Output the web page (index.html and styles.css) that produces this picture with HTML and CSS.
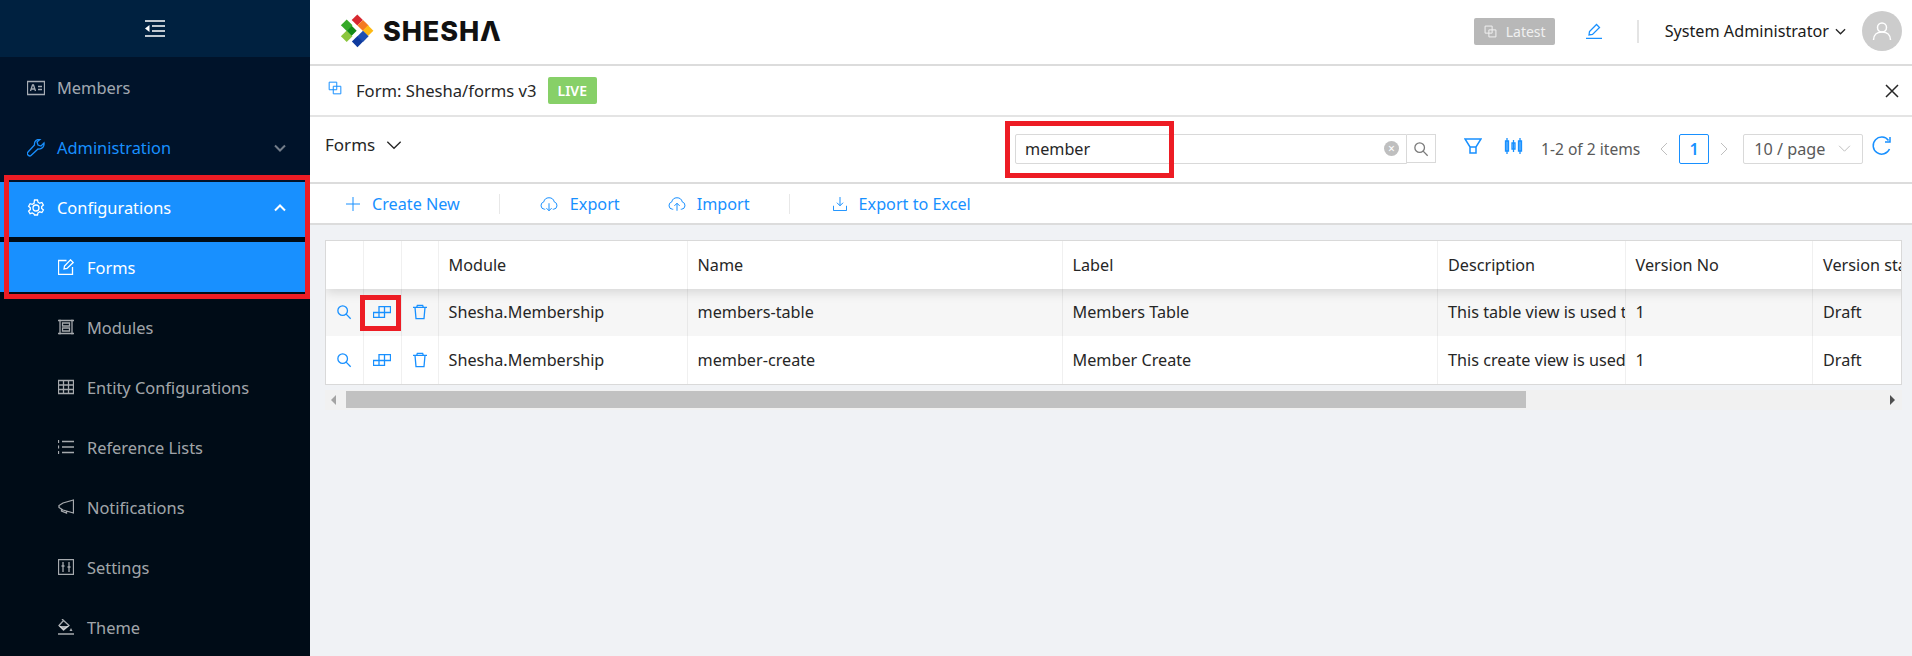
FILE: index.html
```html
<!DOCTYPE html>
<html lang="en">
<head>
  <meta charset="UTF-8">
  <title>Forms - Shesha</title>
  <link rel="stylesheet" href="styles.css">
</head>
<body>
  <svg class="sprite" width="0" height="0">
    <symbol id="i-search" viewBox="0 0 24 24"><circle cx="10" cy="10" r="7.2"/><path d="M15.2 15.2 22 22"/></symbol>
    <symbol id="i-blocks" viewBox="0 0 18 12"><path d="M.5 6.500h11v5H.5zM6 6.500v5M6 6.500V.5h11.500v6h-6M11.500.5v6"/></symbol>
    <symbol id="i-trash" viewBox="0 0 24 24"><path d="M1.500 5h21M7 5l1-3h8l1 3M4.500 5l1.500 17h12l1.500-17"/></symbol>
    <symbol id="i-copy" viewBox="0 0 24 24"><path d="M2 2h13v13H2zM9 9h13v13H9z"/></symbol>
    <symbol id="i-chev" viewBox="0 0 24 24"><path d="M2 7l10 10L22 7"/></symbol>
    <symbol id="i-cloud" viewBox="0 0 24 24"><path d="M7 19H6a5 5 0 0 1-1-9.800 7.200 7.200 0 0 1 14 0A5 5 0 0 1 18 19h-1"/></symbol>
  </svg>

  <aside class="sidebar">
    <div class="sidebar-top">
      <svg class="collapse" viewBox="0 0 20 18"><path d="M0 1h20M7 6h13M7 11h13M0 16h20"/><path class="solid" d="M4.500 5v7L0 8.500z"/></svg>
    </div>
    <nav class="menu">
      <a class="item item-first">
        <svg class="ic" viewBox="0 0 18 14"><path d="M.5.500h17v13H.5zM3.500 10l2-6h1l2 6M4.500 8h3M11 5.500h4M11 8.500h4"/></svg>
        <span>Members</span>
      </a>
      <a class="item item-open">
        <svg class="ic" viewBox="0 0 18 18"><path d="M17 4l-3 3-3-1-1-3 3-2.500C10 0 7 2 7.500 6L1 13c-1 1-.5 2.500 0 3s2 1.500 3 .5l7-6.500c4 .5 6.500-2.500 6-6z"/></svg>
        <span>Administration</span>
        <svg class="caret" viewBox="0 0 12 8"><path d="M1 1.500l5 5 5-5"/></svg>
      </a>
      <a class="item item-active">
        <svg class="ic" viewBox="0 0 18 18"><circle cx="9" cy="9" r="3"/><path d="M7.500 1h3l.5 2.200 1.700 1 2.200-.7 1.500 2.600-1.700 1.500v1.800l1.700 1.500-1.500 2.600-2.200-.7-1.700 1-.5 2.200h-3L7 15l-1.700-1-2.200.7-1.500-2.600 1.700-1.500V8.800L1.600 7.300l1.500-2.600 2.200.7 1.700-1z"/></svg>
        <span>Configurations</span>
        <svg class="caret" viewBox="0 0 12 8"><path d="M1 6.500l5-5 5 5"/></svg>
      </a>
      <div class="submenu">
        <a class="item sub sub-active">
          <svg class="ic" viewBox="0 0 16 16"><path d="M8.500 1.500H.5v14h14V8M6 10l.5-3L12.500.8l2.700 2.700L9 9.500z"/></svg>
          <span>Forms</span>
        </a>
        <a class="item sub">
          <svg class="ic" viewBox="0 0 16 16"><path d="M2 .5v15M14 .5v15M0 1.500h16M0 14.500h16M4.500 4h7v3h-7zM4.500 9h7v3h-7z"/></svg>
          <span>Modules</span>
        </a>
        <a class="item sub">
          <svg class="ic" viewBox="0 0 16 14"><path d="M.5.500h15v13H.5zM.5 5h15M.5 9.500h15M5.500.5v13M10.500.5v13"/></svg>
          <span>Entity Configurations</span>
        </a>
        <a class="item sub">
          <svg class="ic" viewBox="0 0 16 14"><path d="M4 1.500h12M4 7h12M4 12.500h12M.5 0v3M.5 5.500v3M.5 11v3"/></svg>
          <span>Reference Lists</span>
        </a>
        <a class="item sub">
          <svg class="ic" viewBox="0 0 16 15"><path d="M15.500.5v13L5 10.500 1 8V6l4-2.500zM3.500 9.500v2l5 2v-1.500"/></svg>
          <span>Notifications</span>
        </a>
        <a class="item sub">
          <svg class="ic" viewBox="0 0 16 16"><path d="M.5.500h15v15H.5zM5 3v10M11 3v10M3.500 7h3M9.500 8h3"/></svg>
          <span>Settings</span>
        </a>
        <a class="item sub">
          <svg class="ic" viewBox="0 0 16 16"><path d="M4 0l2 2M5.500 1.500L1 6.500l4.500 4.500 5.500-4.500zM0 15h16"/><path class="solid" d="M1 7h10L5.500 11zM13 9l1.500 3h-3z"/></svg>
          <span>Theme</span>
        </a>
      </div>
    </nav>
  </aside>

  <div class="main">
    <header class="topbar">
      <div class="logo">
        <svg class="logo-mark" viewBox="0 0 32 32">
          <path class="m1" d="M16.300-.6l5.600 5.600-5.600 5.600-5.600-5.600z"/>
          <path class="m2" d="M22 4.900l5.600 5.600-5.600 5.600-5.600-5.600z"/>
          <path class="m3" d="M27 10.300l5.400 5.400-5.400 5.400-5.400-5.400z"/>
          <path class="m4" d="M22 15.700l5.600 5.600-5.600 5.600-5.600-5.600z"/>
          <path class="m5" d="M16.500 21l5.600 5.600-5.600 5.600-5.600-5.600z"/>
          <path class="m6" d="M5.700 4.500l5.800 5.800-5.800 5.800-5.800-5.800z"/>
          <path class="m8" d="M5.700 15.500l5.800 5.800-5.800 5.800-5.800-5.800z"/>
          <path class="m7" d="M10.700 10.800l5 5-5 5-5-5z"/>
        </svg>
        <span class="logo-text">SHESHΛ</span>
      </div>
      <div class="top-right">
        <span class="tag-latest"><svg class="line"><use href="#i-copy"/></svg>Latest</span>
        <svg class="edit" viewBox="0 0 16 16"><path d="M0 15.500h16M3 12l.5-3.500L10.500 1.500l3 3L6.500 11.500z"/></svg>
        <span class="vbar"></span>
        <span class="username">System Administrator</span>
        <svg class="line user-caret"><use href="#i-chev"/></svg>
        <span class="avatar">
          <svg viewBox="0 0 20 20"><circle cx="10" cy="6.500" r="4.500"/><path d="M1.500 19c0-5 3.500-8 8.500-8s8.500 3 8.500 8"/></svg>
        </span>
      </div>
    </header>

    <div class="formbar">
      <svg class="line form-ic"><use href="#i-copy"/></svg>
      <span class="form-name">Form: Shesha/forms v3</span>
      <span class="tag-live">LIVE</span>
      <svg class="close" viewBox="0 0 14 14"><path d="M1 1l12 12M13 1L1 13"/></svg>
    </div>

    <div class="toolbar">
      <div class="title">Forms <svg class="line title-caret"><use href="#i-chev"/></svg></div>
      <div class="search">
        <div class="search-input">
          <span>member</span>
          <span class="clear">×</span>
        </div>
        <button class="search-btn"><svg class="line"><use href="#i-search"/></svg></button>
      </div>
      <svg class="tool-ic filter" viewBox="0 0 18 16"><path d="M1 1h16l-5 8H6zM6 9h6v6H6z"/></svg>
      <svg class="tool-ic columns" viewBox="0 0 18 16"><path d="M1 3h3v10H1zM7.500 5h3v6h-3zM14 3h3v10h-3zM2.500 0v16M9 2v12M15.500 0v16"/></svg>
      <span class="count">1-2 of 2 items</span>
      <svg class="page-arrow first" viewBox="0 0 8 14"><path d="M7 1L1 7l6 6"/></svg>
      <span class="page-num">1</span>
      <svg class="page-arrow" viewBox="0 0 8 14"><path d="M1 1l6 6-6 6"/></svg>
      <div class="page-size">10 / page <svg class="line"><use href="#i-chev"/></svg></div>
      <svg class="tool-ic reload" viewBox="0 0 20 20"><path d="M17.500 13a8.500 8.500 0 1 1-1-8.500M18 1v5h-5"/></svg>
    </div>

    <div class="actions">
      <a class="action create"><svg class="act-ic" viewBox="0 0 14 14"><path d="M7 0v14M0 7h14"/></svg>Create New</a>
      <span class="act-sep"></span>
      <a class="action export"><svg class="act-ic cloud" viewBox="0 0 24 24"><use href="#i-cloud"/><path d="M12 11v10M8.500 17.500 12 21l3.500-3.500"/></svg>Export</a>
      <a class="action last"><svg class="act-ic cloud" viewBox="0 0 24 24"><use href="#i-cloud"/><path d="M12 11v10M8.500 14.500 12 11l3.500 3.500"/></svg>Import</a>
      <span class="act-sep"></span>
      <a class="action"><svg class="act-ic" viewBox="0 0 16 16"><path d="M8 0v10M4.500 6.500 8 10l3.500-3.500M.5 10v5.500h15V10"/></svg>Export to Excel</a>
    </div>

    <div class="content">
      <div class="table-wrap">
        <table class="grid">
          <colgroup>
            <col class="c-ic"><col class="c-ic2"><col class="c-ic">
            <col class="c-mod"><col class="c-name"><col class="c-label">
            <col class="c-desc"><col class="c-ver"><col class="c-status">
          </colgroup>
          <thead>
            <tr><th></th><th></th><th></th><th>Module</th><th>Name</th><th>Label</th><th>Description</th><th>Version No</th><th>Version status</th></tr>
          </thead>
          <tbody>
            <tr class="hover">
              <td class="ic-cell"><svg class="line"><use href="#i-search"/></svg></td>
              <td class="ic-cell"><svg class="line blocks"><use href="#i-blocks"/></svg></td>
              <td class="ic-cell"><svg class="line"><use href="#i-trash"/></svg></td>
              <td>Shesha.Membership</td><td>members-table</td><td>Members Table</td>
              <td>This table view is used to list</td><td>1</td><td>Draft</td>
            </tr>
            <tr>
              <td class="ic-cell"><svg class="line"><use href="#i-search"/></svg></td>
              <td class="ic-cell"><svg class="line blocks"><use href="#i-blocks"/></svg></td>
              <td class="ic-cell"><svg class="line"><use href="#i-trash"/></svg></td>
              <td>Shesha.Membership</td><td>member-create</td><td>Member Create</td>
              <td>This create view is used to add</td><td>1</td><td>Draft</td>
            </tr>
          </tbody>
        </table>
      </div>
      <div class="hscroll">
        <span class="arrow-l"></span>
        <span class="thumb"></span>
        <span class="arrow-r"></span>
      </div>
    </div>
  </div>

  <div class="mark mark-menu"></div>
  <div class="mark mark-search"></div>
  <div class="mark mark-row"></div>
</body>
</html>
```

FILE: styles.css
```css
* { box-sizing: border-box; }
html, body { height: 100%; }
body { margin: 0; display: flex; height: 656px; overflow: hidden; font-family: "Noto Sans", Arial, sans-serif; font-size: 16.2px; color: #262626; background: #f0f2f5; }
svg { display: block; flex: none; }
svg path, svg circle { fill: none; stroke: currentColor; vector-effect: non-scaling-stroke; }
svg .solid { fill: currentColor; stroke: none; }
.sprite { position: absolute; }
.line { width: 16px; height: 16px; }

.sidebar { width: 310px; flex: none; background: #000c17; display: flex; flex-direction: column; }
.sidebar-top { height: 57px; flex: none; background: #002140; display: flex; align-items: center; justify-content: center; color: #fff; }
.collapse { width: 20px; height: 18px; stroke-width: 1.5; }
.menu { flex: 1; font-size: 16.4px; }
.item { display: flex; align-items: center; height: 55px; margin-bottom: 5px; padding: 0 27px 4px; color: rgba(255,255,255,.65); }
.item > span { margin-left: 12px; }
.item .ic { width: 18px; height: 18px; stroke-width: 1.3; }
.item-first { margin-top: 5px; background: #00132a; box-shadow: 0 -5px 0 #00132a, 0 5px 0 #00132a; }
.item-open { color: #1890ff; background: #00132a; box-shadow: 0 5px 0 #00132a; }
.item-active { background: #1890ff; color: #fff; }
.caret { width: 12px; height: 8px; margin-left: auto; margin-right: -3px; color: rgba(255,255,255,.45); stroke-width: 2; }
.item-active .caret { color: #fff; }
.sub { height: 50px; margin-bottom: 10px; padding: 0 27px 0 58px; }
.sub > span { margin-left: 13px; }
.sub .ic { width: 16px; height: 16px; }
.sub-active { background: #1890ff; color: #fff; margin-bottom: 10px; }

.main { flex: 1; min-width: 0; display: flex; flex-direction: column; }
.topbar { height: 66px; flex: none; background: #fff; border-bottom: 2px solid #dcdcdc; display: flex; align-items: center; justify-content: space-between; padding: 0 10px 2px 31px; }
.logo { display: flex; align-items: center; gap: 10px; }
.logo-mark { width: 32px; height: 32px; overflow: visible; }
.logo-mark path { stroke: none; }
.logo-mark .m1 { fill: #d7282f; }
.logo-mark .m2 { fill: #f47a20; }
.logo-mark .m3 { fill: #fdb913; }
.logo-mark .m4 { fill: #1d4fb0; }
.logo-mark .m5 { fill: #0f3a9e; }
.logo-mark .m6 { fill: #36a928; }
.logo-mark .m7 { fill: #138a16; }
.logo-mark .m8 { fill: #8cc63f; }
.logo-text { font-family: Inter, sans-serif; font-weight: 800; font-size: 27px; letter-spacing: .9px; color: #111; }
.top-right { display: flex; align-items: center; }
.tag-latest { display: flex; align-items: center; gap: 9px; height: 27px; padding: 0 9px 0 10px; background: #b8b8b8; color: #f0f0f0; border-radius: 2px; font-size: 14px; }
.tag-latest .line { width: 13px; height: 13px; }
.edit { width: 16px; height: 16px; margin-left: 31px; color: #1890ff; stroke-width: 1.3; }
.vbar { width: 2px; height: 23px; margin: 0 26px 0 35px; background: #e4e4e4; }
.username { color: #1a1a1a; }
.user-caret { width: 11px; height: 11px; margin: 0 16px 0 6px; stroke-width: 1.3; }
.avatar { width: 40px; height: 40px; border-radius: 50%; background: #ccc; color: #fff; display: flex; align-items: center; justify-content: center; }
.avatar svg { width: 20px; height: 20px; stroke-width: 1.5; }

.formbar { height: 51px; flex: none; background: #fff; border-bottom: 2px solid #e4e4e4; display: flex; align-items: center; padding: 0 13px 0 18px; }
.form-ic { width: 14px; height: 14px; color: #1890ff; margin-top: -5px; }
.form-name { margin-left: 14px; font-size: 16.6px; color: #262626; }
.tag-live { margin-left: 11px; height: 27px; padding: 0 10px; display: flex; align-items: center; background: #87d068; color: #fff; border-radius: 2px; font-size: 14px; font-weight: 600; }
.close { width: 14px; height: 14px; margin-left: auto; color: #262626; stroke-width: 1.5; }

.toolbar { height: 67px; flex: none; background: #fff; border-bottom: 2px solid #dcdcdc; display: flex; align-items: center; padding: 0 20px 2px 15px; }
.title { display: flex; align-items: center; gap: 11px; width: 690px; flex: none; margin-top: -8px; font-size: 17px; }
.title-caret { width: 16px; height: 16px; stroke-width: 1.3; }
.search { display: flex; align-items: center; flex: none; }
.search-input { width: 392px; height: 30px; border: 1px solid #d9d9d9; border-radius: 2px 0 0 2px; display: flex; align-items: center; justify-content: space-between; padding: 0 7px 0 9px; }
.clear { width: 15px; height: 15px; border-radius: 50%; background: #bfbfbf; color: #fff; font-size: 12px; line-height: 15px; text-align: center; }
.search-btn { width: 29px; height: 29px; padding: 0; background: #fff; border: 1px solid #d9d9d9; border-left: 0; color: #7a7a7a; display: flex; align-items: center; justify-content: center; }
.search-btn .line { width: 16px; height: 16px; stroke-width: 1.3; }
.tool-ic { color: #1890ff; }
.filter { width: 18px; height: 16px; margin: -6px 0 0 28px; stroke-width: 1.5; }
.columns { width: 21px; height: 16px; margin: -6px 0 0 21px; stroke-width: 1.3; }
.count { margin-left: 17px; font-size: 15.6px; color: #595959; white-space: nowrap; }
.page-arrow { width: 8px; height: 14px; color: #bfbfbf; margin-left: 11px; }
.page-arrow.first { margin-left: 20px; }
.page-num { width: 30px; height: 30px; flex: none; margin-left: 11px; border: 1px solid #1890ff; border-radius: 2px; color: #1890ff; display: flex; align-items: center; justify-content: center; font-weight: 600; }
.page-size { width: 120px; height: 30px; flex: none; margin-left: 15px; border: 1px solid #d9d9d9; border-radius: 2px; display: flex; align-items: center; justify-content: space-between; padding: 0 11px 0 10px; color: #595959; white-space: nowrap; }
.page-size .line { width: 13px; height: 13px; color: #bfbfbf; }
.reload { width: 20px; height: 20px; margin: -6px 0 0 9px; stroke-width: 1.5; }

.actions { height: 41px; flex: none; background: #fff; border-bottom: 2px solid #dcdcdc; display: flex; align-items: center; padding: 1px 0 0 36px; color: #1890ff; }
.action { display: flex; align-items: center; gap: 12px; margin-right: 49px; }
.action.create { margin-right: 39px; }
.action.export { margin-right: 48px; }
.action.last { margin-right: 39px; gap: 11px; }
.act-ic { width: 14px; height: 14px; }
.act-ic.cloud { width: 18px; height: 18px; }
.act-sep { width: 1px; height: 20px; background: #e8e8e8; margin-right: 40px; }
.action.last + .act-sep { margin-right: 43px; }

.content { flex: 1; padding: 15px 10px 0 15px; }
.table-wrap { width: 1577px; border: 1px solid #d9d9d9; background: #fff; overflow: hidden; }
.grid { width: 1700px; table-layout: fixed; border-collapse: collapse; }
.c-ic { width: 37px; }
.c-ic2 { width: 38px; }
.c-mod { width: 249px; }
.c-name { width: 375px; }
.c-label { width: 375.500px; }
.c-desc { width: 187.500px; }
.c-ver { width: 187.500px; }
.c-status { width: 351px; }
.grid th, .grid td { padding: 0 0 0 10px; height: 47.500px; text-align: left; font-weight: 400; color: #262626; white-space: nowrap; overflow: hidden; border-right: 1px solid #f0f0f0; }
.grid thead { position: relative; box-shadow: 0 4px 10px rgba(0,0,0,.12); }
.grid .hover td { background: #f6f6f6; border-right-color: #e8e8e8; }
.grid .ic-cell { padding: 0; color: #1890ff; }
.ic-cell .line { margin: 0 auto; stroke-width: 1.3; }
.ic-cell .blocks { width: 18px; height: 12px; }

.hscroll { width: 1577px; height: 20px; margin-top: 5px; background: #f1f1f1; display: flex; align-items: center; justify-content: space-between; }
.thumb { width: 1180px; height: 17px; margin-left: 16px; margin-right: auto; background: #c1c1c1; }
.arrow-l { width: 0; height: 0; margin-left: 6px; margin-right: -6px; border: 5px solid transparent; border-left: 0; border-right-color: #a3a3a3; }
.arrow-r { width: 0; height: 0; margin-right: 7px; border: 5px solid transparent; border-right: 0; border-left-color: #505050; }

.mark { position: absolute; border: 5px solid #ed1c24; pointer-events: none; }
.mark-menu { left: 4px; top: 175px; width: 306px; height: 124px; }
.mark-search { left: 1005px; top: 121px; width: 169px; height: 57px; }
.mark-row { left: 360px; top: 295px; width: 41px; height: 36px; }
```
